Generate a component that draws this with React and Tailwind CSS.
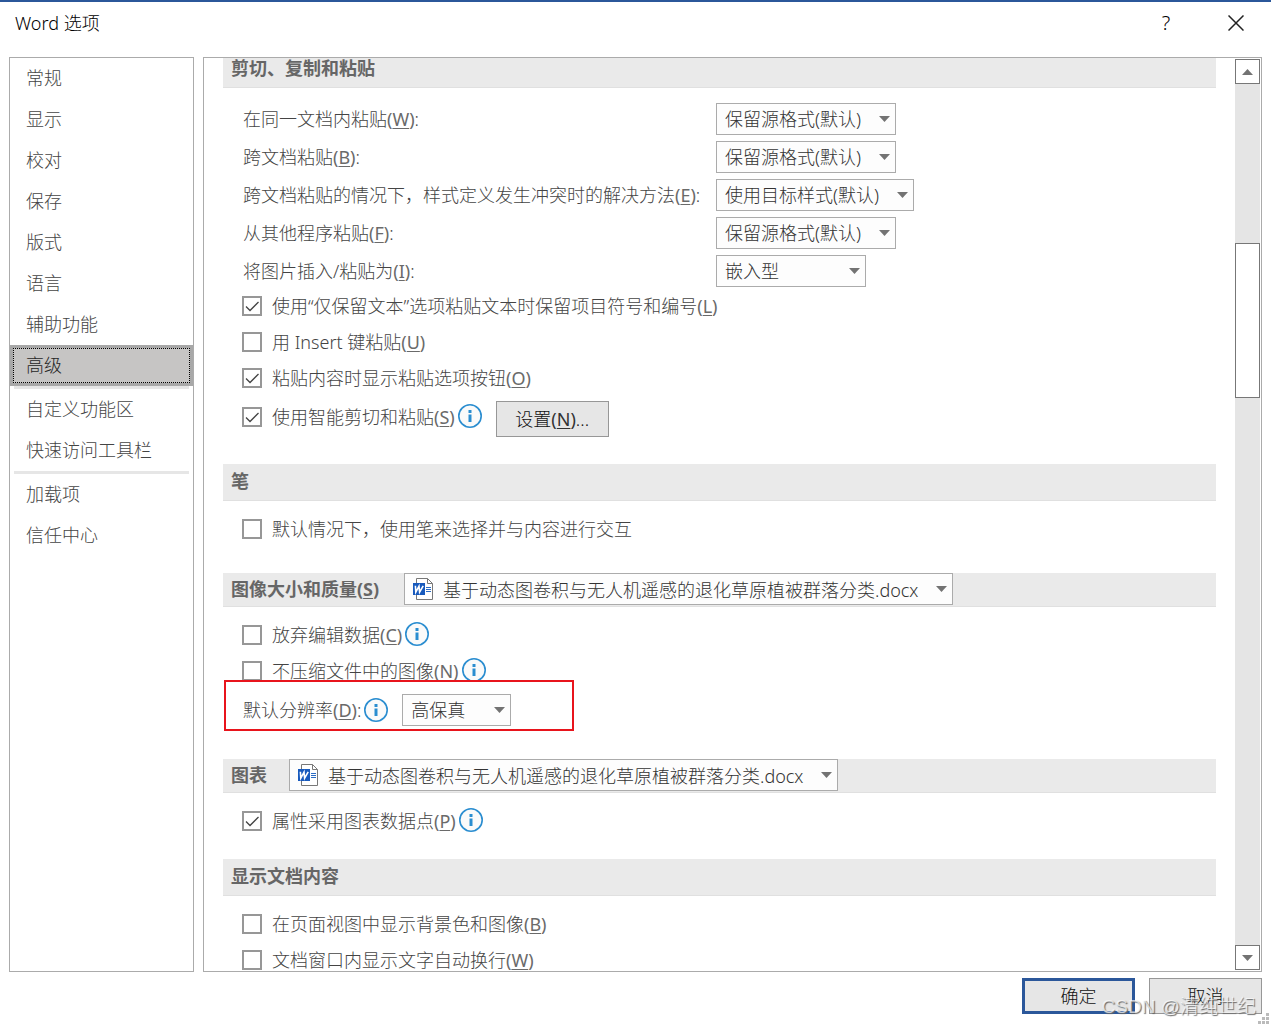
import React from 'react';

const navGroups = [
  ['常规', '显示', '校对', '保存', '版式', '语言', '辅助功能', '高级'],
  ['自定义功能区', '快速访问工具栏'],
  ['加载项', '信任中心'],
];

const pasteOptions = [
  { id: 'same-doc', label: '在同一文档内粘贴', hotkey: 'W', value: '保留源格式(默认)', width: 'w-[180px]' },
  { id: 'cross-doc', label: '跨文档粘贴', hotkey: 'B', value: '保留源格式(默认)', width: 'w-[180px]' },
  { id: 'conflict', label: '跨文档粘贴的情况下，样式定义发生冲突时的解决方法', hotkey: 'E', value: '使用目标样式(默认)', width: 'w-[198px]' },
  { id: 'other-app', label: '从其他程序粘贴', hotkey: 'F', value: '保留源格式(默认)', width: 'w-[180px]' },
  { id: 'picture', label: '将图片插入/粘贴为', hotkey: 'I', value: '嵌入型', width: 'w-[150px]' },
];

const documentName = '基于动态图卷积与无人机遥感的退化草原植被群落分类.docx';

function Hotkey({ children, color = 'text-[#6a6a6a]' }) {
  return (
    <span className={`font-normal ${color}`}>
      (<span className="underline decoration-1 underline-offset-2">{children}</span>)
    </span>
  );
}

function InfoIcon() {
  return (
    <svg className="w-6 h-6 shrink-0" viewBox="0 0 24 24" aria-hidden="true">
      <circle cx="12" cy="12" r="11.2" fill="#fafafa" stroke="#2a8dd0" strokeWidth="1.6" />
      <path d="M10.5 6h3v3h-3zM10.5 10.5h3V18h-3z" fill="#2a8dd0" />
    </svg>
  );
}

function WordIcon() {
  return (
    <svg className="absolute left-[9px] top-[5px] w-5 h-[22px] pointer-events-none" viewBox="0 0 20 22" aria-hidden="true">
      <path d="M3.5 .5h11l5 5v16h-16z" fill="#fff" stroke="#777" />
      <path d="M14.5 .5v5h5" fill="none" stroke="#777" />
      <path d="M13 9.5h5M13 11.5h5M13 13.5h5" stroke="#2b6cc4" />
      <path d="M0 5h12v12H0z" fill="#185abd" />
      <path d="M2.4 7.8l.4 6.4 3.2-6 .6 6 3.6-6.4" fill="none" stroke="#fff" strokeWidth="1.6" />
    </svg>
  );
}

function Dropdown({ id, value, width, icon }) {
  return (
    <div className={`relative shrink-0 h-8 ${width}`}>
      <select
        id={id}
        className={`appearance-none block w-full h-8 border border-[#ababab] bg-[#fdfdfd] text-[#333] pr-6 ${icon ? 'pl-[38px]' : 'pl-2'}`}
      >
        <option>{value}</option>
      </select>
      {icon && <WordIcon />}
      <svg className="absolute right-[6px] top-[13px] w-[11px] h-[6px] pointer-events-none" viewBox="0 0 11 6" aria-hidden="true">
        <path d="M0 0h11L5.5 6z" fill="#737373" />
      </svg>
    </div>
  );
}

function CheckOption({ label, hotkey, checked, info, children, height = 'h-9' }) {
  return (
    <div className={`flex items-center pl-[19px] ${height}`}>
      <label className="flex items-center gap-[10px] whitespace-nowrap">
        <span className="relative w-5 h-5">
          <input
            type="checkbox"
            defaultChecked={checked}
            className="peer appearance-none block w-5 h-5 border-2 border-[#979797] bg-white"
          />
          <svg className="hidden peer-checked:block absolute inset-0 w-5 h-5 pointer-events-none" viewBox="0 0 20 20" aria-hidden="true">
            <path d="M4 10.5l4 4 8.5-8.5" fill="none" stroke="#444" strokeWidth="1.3" />
          </svg>
        </span>
        <span>
          {label}
          {hotkey && <Hotkey>{hotkey}</Hotkey>}
        </span>
      </label>
      {info && <div className="pl-[3px] pb-[2px]"><InfoIcon /></div>}
      {children}
    </div>
  );
}

function SectionHeader({ children, compact }) {
  return (
    <div className={`flex items-start pl-2 mb-[10px] bg-[#eaeaea] border-b border-[#e0e0e0] leading-8 ${compact ? 'h-[34px]' : 'h-[37px] pt-px'}`}>
      {children}
    </div>
  );
}

function Heading({ children }) {
  return <h2 className="font-bold text-[#666] whitespace-nowrap">{children}</h2>;
}

function Sidebar() {
  return (
    <nav className="w-[185px] shrink-0 border border-[#ababab]">
      {navGroups.map((group, i) => (
        <React.Fragment key={i}>
          {i > 0 && <div className="h-[3px] mx-1 bg-[#e6e6e6]" />}
          {group.map(item => (
            item === '高级' ? (
              <button key={item} className="block w-full h-[41px] p-[3px] bg-[#a8a8a8] text-[#262626] text-left">
                <span className="flex items-center h-full pl-3 pb-[2px] bg-[#c6c5c4] border border-dotted border-black">{item}</span>
              </button>
            ) : (
              <button key={item} className="block w-full h-[41px] pl-4 pb-px text-left">{item}</button>
            )
          ))}
        </React.Fragment>
      ))}
    </nav>
  );
}

function Scrollbar() {
  return (
    <div className="flex flex-col w-[25px] shrink-0 my-px mr-px bg-[#e5e5e5]">
      <button aria-label="向上滚动" className="flex items-center justify-center h-[25px] border border-[#777] bg-white">
        <svg className="w-[11px] h-[6px]" viewBox="0 0 11 6"><path d="M0 6h11L5.5 0z" fill="#737373" /></svg>
      </button>
      <div className="flex-[159]" />
      <div className="flex-[153] border border-[#777] bg-white" />
      <div className="flex-[547]" />
      <button aria-label="向下滚动" className="flex items-center justify-center h-[25px] border border-[#777] bg-white">
        <svg className="w-[11px] h-[6px]" viewBox="0 0 11 6"><path d="M0 0h11L5.5 6z" fill="#737373" /></svg>
      </button>
    </div>
  );
}

function AdvancedOptions() {
  return (
    <div className="flex-1 min-w-0 mx-[19px] -mt-[7px]">
      <section>
        <SectionHeader><Heading>剪切、复制和粘贴</Heading></SectionHeader>
        <div className="flex flex-col gap-[6px] pl-5 pt-[5px] pb-px">
          {pasteOptions.map(option => (
            <div key={option.id} className="flex items-center">
              <label htmlFor={option.id} className="w-[473px] shrink-0 whitespace-nowrap">
                {option.label}<Hotkey>{option.hotkey}</Hotkey>:
              </label>
              <Dropdown id={option.id} value={option.value} width={option.width} />
            </div>
          ))}
        </div>
        <CheckOption label="使用“仅保留文本”选项粘贴文本时保留项目符号和编号" hotkey="L" checked />
        <CheckOption label="用 Insert 键粘贴" hotkey="U" />
        <CheckOption label="粘贴内容时显示粘贴选项按钮" hotkey="O" checked />
        <CheckOption label="使用智能剪切和粘贴" hotkey="S" checked info height="h-[42px]">
          <button className="w-[113px] h-9 ml-[14px] mt-1 border border-[#979797] bg-[#e6e6e6] text-[#111]">
            设置<Hotkey color="text-[#333]">N</Hotkey>...
          </button>
        </CheckOption>
      </section>

      <section className="mt-[26px]">
        <SectionHeader><Heading>笔</Heading></SectionHeader>
        <CheckOption label="默认情况下，使用笔来选择并与内容进行交互" />
      </section>

      <section className="mt-[26px]">
        <SectionHeader compact>
          <label htmlFor="image-doc" className="w-[173px] shrink-0 font-bold text-[#666] whitespace-nowrap">
            图像大小和质量(<span className="underline decoration-1 underline-offset-2">S</span>)
          </label>
          <Dropdown id="image-doc" value={documentName} width="w-[549px]" icon />
        </SectionHeader>
        <CheckOption label="放弃编辑数据" hotkey="C" info />
        <CheckOption label="不压缩文件中的图像" hotkey="N" info />
        <div className="relative flex items-center h-[42px] pl-5">
          <label htmlFor="resolution" className="pr-[3px] whitespace-nowrap">默认分辨率<Hotkey>D</Hotkey>:</label>
          <InfoIcon />
          <div className="pl-[14px]">
            <Dropdown id="resolution" value="高保真" width="w-[109px]" />
          </div>
          <div className="absolute left-px bottom-0 w-[350px] h-[51px] border-2 border-[#e8141c] pointer-events-none" />
        </div>
      </section>

      <section className="mt-7">
        <SectionHeader compact>
          <label htmlFor="chart-doc" className="w-[58px] shrink-0 font-bold text-[#666]">图表</label>
          <Dropdown id="chart-doc" value={documentName} width="w-[549px]" icon />
        </SectionHeader>
        <CheckOption label="属性采用图表数据点" hotkey="P" checked info />
      </section>

      <section className="mt-5">
        <SectionHeader><Heading>显示文档内容</Heading></SectionHeader>
        <CheckOption label="在页面视图中显示背景色和图像" hotkey="B" />
        <CheckOption label="文档窗口内显示文字自动换行" hotkey="W" />
      </section>
    </div>
  );
}

function App() {
  return (
    <div className="relative flex flex-col h-screen overflow-hidden border-t-2 border-[#2b579a] bg-white font-['Noto_Sans','Noto_Sans_CJK_SC',sans-serif] font-light text-[18px] leading-6 text-[#444]">
      <header className="flex items-center h-[55px] shrink-0 pl-[15px] pr-[27px] pb-[14px] text-black">
        <h1 className="flex-1">Word 选项</h1>
        <button aria-label="帮助" className="w-4 mr-[54px] text-[20px]">?</button>
        <button aria-label="关闭" className="w-4 h-4">
          <svg className="w-4 h-4" viewBox="0 0 16 16"><path d="M.5 .5l15 15M15.5 .5l-15 15" stroke="#222" strokeWidth="1.5" /></svg>
        </button>
      </header>

      <div className="flex flex-1 min-h-0 gap-[9px] px-[9px]">
        <Sidebar />
        <main className="flex flex-1 min-w-0 overflow-hidden border border-[#ababab]">
          <AdvancedOptions />
          <Scrollbar />
        </main>
      </div>

      <footer className="flex justify-end gap-[14px] shrink-0 pt-[6px] pb-3 px-[9px] text-[#111]">
        <button className="w-[113px] h-9 border-3 border-[#2b579a] bg-[#e6e6e6]">确定</button>
        <button className="w-[113px] h-9 border border-[#979797] bg-[#e6e6e6]">取消</button>
      </footer>

      <div className="absolute right-[15px] bottom-[7px] font-['Liberation_Sans','Noto_Sans_CJK_SC',sans-serif] text-[19px] text-white/70 [text-shadow:1px_1px_1px_#666] whitespace-nowrap pointer-events-none">
        CSDN @清纯世纪
      </div>
      <svg className="absolute right-[2px] bottom-[2px] w-[11px] h-[11px]" viewBox="0 0 11 11" aria-hidden="true">
        <path d="M8 0h3v3H8zM4 4h3v3H4zM8 4h3v3H8zM0 8h3v3H0zM4 8h3v3H4zM8 8h3v3H8z" fill="#bbb" />
      </svg>
    </div>
  );
}

export default App;
